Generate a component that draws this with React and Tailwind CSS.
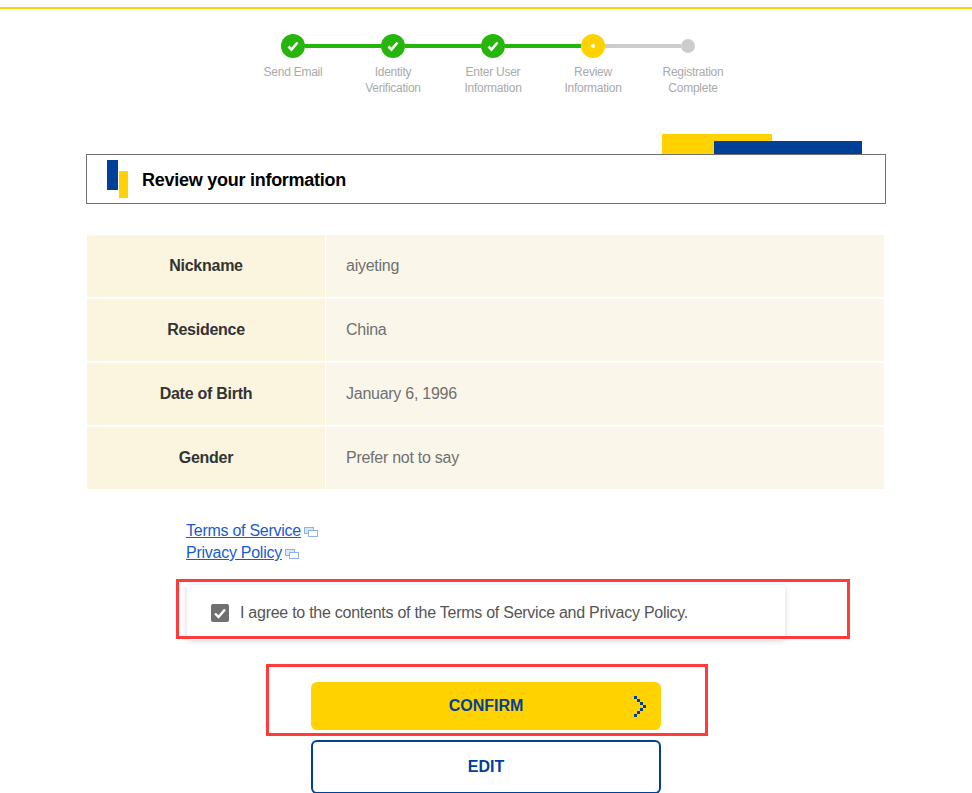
const steps = [
  ["Send Email"],
  ["Identity", "Verification"],
  ["Enter User", "Information"],
  ["Review", "Information"],
  ["Registration", "Complete"],
];

const rows = [
  ["Nickname", "aiyeting"],
  ["Residence", "China"],
  ["Date of Birth", "January 6, 1996"],
  ["Gender", "Prefer not to say"],
];

const DoneDot = () => (
  <div className="w-6 h-6 rounded-full bg-[#26b50a] flex items-center justify-center shrink-0">
    <svg width="14" height="14" viewBox="0 0 14 14" fill="none">
      <path d="M2.5 7.5 L5.5 10.5 L11.5 3.5" stroke="#fff" strokeWidth="2.6" />
    </svg>
  </div>
);

const Line = ({ grey }) => (
  <div className={`w-[76px] h-1 shrink-0 ${grey ? "bg-[#cccccc]" : "bg-[#26b50a]"}`} />
);

const ExternalIcon = () => (
  <svg width="14" height="10" viewBox="0 0 14 10" fill="none" className="inline-block ml-[3px]">
    <rect x="0.5" y="0.5" width="9" height="6" fill="#dbe7fa" stroke="#8fb2ea" />
    <rect x="4.5" y="3.5" width="9" height="6" fill="#fff" stroke="#8fb2ea" />
  </svg>
);

const PixelArrow = () => (
  <svg width="14" height="22" viewBox="0 0 14 22" fill="#004098" shapeRendering="crispEdges">
    <rect x="1" y="0" width="3" height="3" />
    <rect x="4" y="3" width="3" height="3" />
    <rect x="7" y="6" width="3" height="3" />
    <rect x="10" y="9" width="3" height="3" />
    <rect x="7" y="12" width="3" height="3" />
    <rect x="4" y="15" width="3" height="3" />
    <rect x="1" y="18" width="3" height="3" />
  </svg>
);

export default function App() {
  return (
    <div className="w-[972px] h-[793px] overflow-hidden bg-white relative tracking-[-0.26px] font-['Liberation_Sans',Arial,sans-serif]">
      <div className="pt-[7px]">
        <div className="h-[2px] bg-[#ffd200]" />
      </div>

      {/* stepper */}
      <div className="flex items-center pl-[281px] mt-[25px] h-6">
        <DoneDot />
        <Line />
        <DoneDot />
        <Line />
        <DoneDot />
        <Line />
        <div className="w-6 h-6 rounded-full bg-[#ffd200] flex items-center justify-center shrink-0">
          <div className="w-[4px] h-[4px] rounded-full bg-white" />
        </div>
        <Line grey />
        <div className="w-[14px] h-[14px] rounded-full bg-[#cccccc] shrink-0" />
      </div>
      <div className="flex pl-[243px] mt-[6px]">
        {steps.map((s) => (
          <div key={s[0]} className="w-[100px] text-center text-xs leading-4 text-[#aaaaaa]">
            {s.map((t) => (
              <div key={t}>{t}</div>
            ))}
          </div>
        ))}
      </div>

      {/* heading */}
      <div className="relative mx-[86px] mt-[58px] w-[800px] h-[50px] border border-[#707070] flex items-center pl-[20px]">
        <div className="absolute left-[575px] top-[-21px] w-[110px] h-5 bg-[#ffd200]" />
        <div className="absolute left-[627px] top-[-14px] w-[148px] h-[13px] bg-[#004098]" />
        <div className="relative w-[21px] h-[38px] mr-[14px]">
          <div className="absolute left-0 top-0 w-[11px] h-[30px] bg-[#004098]" />
          <div className="absolute left-[12px] top-[11px] w-[9px] h-[27px] bg-[#ffd200]" />
        </div>
        <h1 className="text-lg font-bold text-black pt-[2px]">Review your information</h1>
      </div>

      {/* info table */}
      <div className="ml-[87px] mt-[31px] w-[797px] flex flex-col gap-[2px]">
        {rows.map(([k, v]) => (
          <div key={k} className="flex h-[62px] gap-[1px]">
            <div className="w-[238px] bg-[#fbf5df] flex items-center justify-center font-bold text-base text-[#333333]">
              {k}
            </div>
            <div className="flex-1 bg-[#faf7ea] flex items-center pl-[20px] text-base text-[#707070]">
              {v}
            </div>
          </div>
        ))}
      </div>

      {/* links */}
      <div className="ml-[186px] mt-[31px] text-base leading-[22px] text-[#1a5ccc]">
        <div>
          <a className="underline">Terms of Service</a>
          <ExternalIcon />
        </div>
        <div>
          <a className="underline">Privacy Policy</a>
          <ExternalIcon />
        </div>
      </div>

      {/* agree */}
      <div className="ml-[187px] mt-[21px] w-[598px] h-[55px] rounded-[4px] bg-white shadow-[0_1px_6px_rgba(0,0,0,0.16)] flex items-center pl-[24px] gap-[11px]">
        <div className="w-[18px] h-[18px] rounded-[2px] bg-[#707070] flex items-center justify-center">
          <svg width="14" height="14" viewBox="0 0 14 14" fill="none">
            <path d="M2 7.5 L5.5 11 L12 3.5" stroke="#fff" strokeWidth="2.4" />
          </svg>
        </div>
        <span className="text-base text-[#555555]">
          I agree to the contents of the Terms of Service and Privacy Policy.
        </span>
      </div>

      {/* buttons */}
      <div className="ml-[311px] mt-[42px] w-[350px] flex flex-col gap-[10px] tracking-normal">
        <button className="relative h-12 rounded-md bg-[#ffd200] text-[#004098] font-bold text-base flex items-center justify-center">
          CONFIRM
          <span className="absolute right-[14px] top-[14px]">
            <PixelArrow />
          </span>
        </button>
        <button className="h-[54px] rounded-md border-2 border-[#004098] bg-white text-[#004098] font-bold text-base flex items-center justify-center">
          EDIT
        </button>
      </div>

      {/* red annotation boxes */}
      <div className="absolute left-[176px] top-[579px] w-[674px] h-[60px] border-[3px] border-[#ff3b3b]" />
      <div className="absolute left-[266px] top-[664px] w-[442px] h-[72px] border-[3px] border-[#ff3b3b]" />
    </div>
  );
}
